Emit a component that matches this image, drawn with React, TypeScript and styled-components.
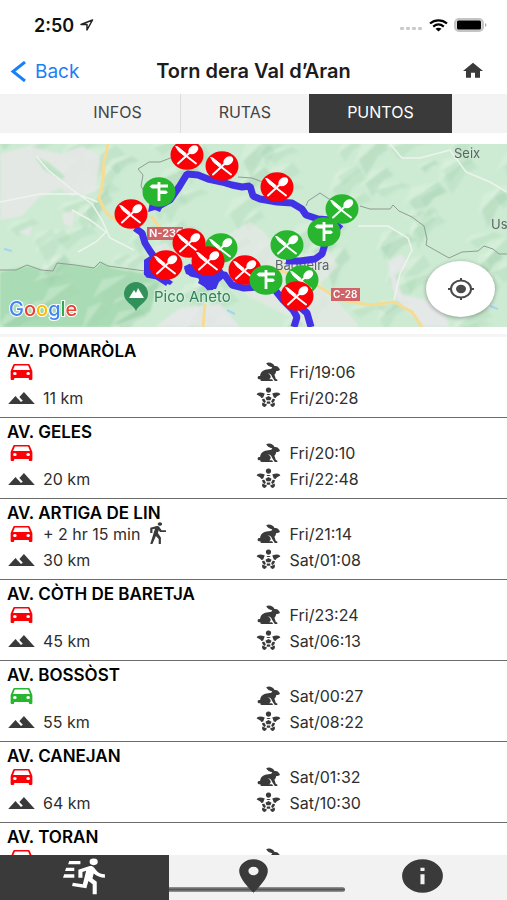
import React from "react";
import styled, { createGlobalStyle } from "styled-components";

const GlobalStyle = createGlobalStyle`
  *, *::before, *::after { box-sizing: border-box; }
  body { margin: 0; background: #fff; }
  button { font: inherit; color: inherit; border: 0; margin: 0; padding: 0; background: none; cursor: pointer; }
`;

const INK = "#3a3a3a";
const RED = "#fb0007";
const GREEN = "#27b62e";

const Screen = styled.div`
  display: flex;
  flex-direction: column;
  height: 100vh;
  overflow: hidden;
  background: #fff;
  color: #222;
  font-family: Inter, "Liberation Sans", sans-serif;
`;

const StatusBar = styled.div`
  display: flex;
  flex: none;
  align-items: center;
  justify-content: space-between;
  height: 50px;
  padding: 0 20px 0 34px;
`;

const Clock = styled.div`
  display: flex;
  align-items: center;
  gap: 6px;
  font-size: 18px;
  font-weight: 600;
  color: #111;
`;

const Signals = styled.div`
  display: flex;
  align-items: center;
  gap: 6px;
`;

const Header = styled.header`
  display: grid;
  flex: none;
  grid-template-columns: 1fr auto 1fr;
  align-items: center;
  height: 44px;
  padding: 0 10px 2px;
`;

const BackButton = styled.button`
  display: flex;
  align-items: center;
  gap: 8px;
  justify-self: start;
  font-size: 19px;
  color: #1a80f5;
`;

const Title = styled.h1`
  margin: 0;
  font-size: 20px;
  line-height: 24px;
  font-weight: 600;
  color: #1c1c1c;
`;

const HomeButton = styled.button`
  display: flex;
  justify-self: end;
  padding-right: 12px;
`;

const Tabs = styled.nav`
  display: flex;
  flex: none;
  justify-content: center;
  height: 39px;
  background: #f3f3f3;
`;

const Tab = styled.button<{ $active?: boolean; $divided?: boolean }>`
  padding: 0 38px 3px;
  font-size: 16px;
  color: ${(p) => (p.$active ? "#fff" : "#444")};
  background: ${(p) => (p.$active ? INK : "transparent")};
  border-right: ${(p) => (p.$divided ? "1px solid #dcdcdc" : "0")};
`;

const MapPane = styled.section`
  position: relative;
  flex: none;
  height: 183px;
  margin-top: 11px;
  overflow: hidden;
`;

const MapDrawing = styled.svg`
  display: block;
  width: 100%;
  height: 100%;
`;

const LocateButton = styled.button`
  position: absolute;
  right: 12px;
  bottom: 10px;
  display: flex;
  align-items: center;
  justify-content: center;
  width: 69px;
  height: 56px;
  border-radius: 50%;
  background: #fff;
  box-shadow: 0 1px 4px rgba(0, 0, 0, 0.35);
`;

const List = styled.ul`
  flex: 1;
  min-height: 0;
  margin: 7px 0 0;
  padding: 0;
  list-style: none;
  overflow-y: auto;
  scrollbar-width: none;
  border-top: 3px solid #f5f5f5;
`;

const Point = styled.li`
  display: grid;
  grid-template-columns: 1fr 1fr;
  grid-template-rows: 20px 22px 30px;
  padding: 4px 7px;
  border-bottom: 1px solid #6b6b6b;
`;

const PointName = styled.h2`
  grid-column: 1 / -1;
  margin: 0;
  font-size: 17px;
  line-height: 20px;
  font-weight: 600;
  color: #000;
`;

const Fact = styled.div`
  display: flex;
  align-items: center;
  gap: 7px;
  font-size: 16px;
  line-height: 20px;
  color: #2e2e2e;
`;

const Duration = styled.span`
  display: flex;
  align-items: center;
  gap: 3px;
`;

const BottomBar = styled.nav`
  position: relative;
  display: grid;
  flex: none;
  grid-template-columns: repeat(3, 1fr);
  height: 45px;
  background: #f2f2f2;
`;

const HomeIndicator = styled.div`
  position: absolute;
  left: 32%;
  bottom: 8px;
  width: 36%;
  height: 5px;
  border-radius: 3px;
  background: linear-gradient(#9a9a9a, #555, #9a9a9a);
`;

const BottomTab = styled.button<{ $active?: boolean }>`
  position: relative;
  display: flex;
  align-items: center;
  justify-content: center;
  padding-bottom: 3px;
  color: ${(p) => (p.$active ? "#fff" : INK)};
  background: ${(p) => (p.$active ? INK : "transparent")};
`;

type IconProps = { d: string; color?: string; width?: number; height?: number };

const Icon = ({ d, color = INK, width = 29, height = 24 }: IconProps) => (
  <svg width={width} height={height} viewBox="0 0 24 24" preserveAspectRatio="none" aria-hidden="true" fill={color}>
    <path d={d} />
  </svg>
);

const CAR =
  "M5,10L6.5,5.5H17.5L19,10M17.5,15A1.5,1.5 0 0,1 16,13.5A1.5,1.5 0 0,1 17.5,12A1.5,1.5 0 0,1 19,13.5A1.5,1.5 0 0,1 17.5,15M6.5,15A1.5,1.5 0 0,1 5,13.5A1.5,1.5 0 0,1 6.5,12A1.5,1.5 0 0,1 8,13.5A1.5,1.5 0 0,1 6.5,15M18.92,5C18.72,4.42 18.16,4 17.5,4H6.5C5.84,4 5.28,4.42 5.08,5L3,11V19A1,1 0 0,0 4,20H5A1,1 0 0,0 6,19V18H18V19A1,1 0 0,0 19,20H20A1,1 0 0,0 21,19V11L18.92,5Z";
const MOUNTAIN = "M14,6L10.25,11L13.1,14.8L11.5,16C9.81,13.75 7,10 7,10L1,18H23L14,6Z";
const WALK =
  "M14.12,10H19V8.2H15.38L13.38,4.87C13.08,4.37 12.54,4.03 11.92,4.03C11.74,4.03 11.58,4.06 11.42,4.11L6,5.8V11H7.8V7.33L9.91,6.67L6,22H7.8L10.67,13.89L13,17V22H14.8V15.59L12.31,11.05L13.04,8.18M14,3.8C15,3.8 15.8,3 15.8,2C15.8,1 15,0.2 14,0.2C13,0.2 12.2,1 12.2,2C12.2,3 13,3.8 14,3.8Z";
const RUN =
  "M16.5,5.5A2,2 0 0,0 18.5,3.5A2,2 0 0,0 16.5,1.5A2,2 0 0,0 14.5,3.5A2,2 0 0,0 16.5,5.5M12.9,19.4L13.9,15L16,17V23H18V15.5L15.9,13.5L16.5,10.5C17.89,12.09 19.89,13 22,13V11C20.24,11.03 18.6,10.11 17.7,8.6L16.7,7C16.34,6.4 15.7,6 15,6C14.7,6 14.5,6.1 14.2,6.1L9,8.3V13H11V9.6L12.8,8.9L11.2,17L6.3,16L5.9,18L12.9,19.4M3,7H7V9H2.5ZM4.5,3H10V5H4ZM2,11H7V13H1.5Z";
const PIN =
  "M12,11.5A2.5,2.5 0 0,1 9.5,9A2.5,2.5 0 0,1 12,6.5A2.5,2.5 0 0,1 14.5,9A2.5,2.5 0 0,1 12,11.5M12,2A7,7 0 0,0 5,9C5,14.25 12,22 12,22C12,22 19,14.25 19,9A7,7 0 0,0 12,2Z";
const INFO = "M13,9H11V7H13M13,17H11V11H13M12,2A10,10 0 0,0 2,12A10,10 0 0,0 12,22A10,10 0 0,0 22,12A10,10 0 0,0 12,2Z";
const HOME = "M10,20V14H14V20H19V12H22L12,2L2,12H5V20H10Z";
const RABBIT =
  "M19.2 21H17.2L14.9 16.8C14.7 14.8 13.2 13.2 11 13C13 14 14 15.6 13.8 17.3C13.6 18.5 13 19 12.4 19.3H14.6C15.4 19.5 15.7 20.3 15.6 21H6.3C5.4 20.9 5.1 20 5.4 19.2C4.2 19.6 2.8 18.8 3 17.4C3.1 16.3 4.2 15.9 5 16.1C5.1 13 6.8 10.8 9.3 9.8C11 9.1 12.9 9.3 14.4 8.7C14.6 8.1 14.9 7.6 15.2 7.3C12.9 6.8 11 5.5 10.1 3.2C12.6 1.8 16 3 17 6.1C19.3 5.7 20.3 7 20.7 8.2C21.5 8.6 21.7 9.9 20.8 10.6C19.9 11.1 18.9 11.1 18.3 11.2C18.2 12.6 17.7 13.9 16.9 14.8L18.1 18.9C19.2 19 19.9 20 19.2 21Z";

const Turtle = () => (
  <svg width="29" height="24" viewBox="0 0 24 24" preserveAspectRatio="none" aria-hidden="true" fill={INK}>
    <path d="M12 1.6C10.2 1.6 9.6 3.2 9.9 4.8C10.1 6 11 6.8 12 6.8S13.9 6 14.1 4.8C14.4 3.2 13.8 1.6 12 1.6Z" />
    <path d="M8.9 7.6L7.6 11.4L6.1 12C5.4 10.4 3.8 9.7 2.2 8.6C2.8 6.6 5 5.8 8.9 7.6Z" />
    <path d="M15.1 7.6L16.4 11.4L17.9 12C18.6 10.4 20.2 9.7 21.8 8.6C21.2 6.6 19 5.8 15.1 7.6Z" />
    <path d="M10.2 8H13.8L12.9 9.1H11.1Z" />
    <path d="M12 10L14.5 11.7L13.6 14.2H10.4L9.5 11.7Z" />
    <path d="M6.7 13L8.6 12.8L9.8 15.4L9 17.1C7.6 16.4 6.7 15 6.7 13Z" />
    <path d="M17.3 13L15.4 12.8L14.2 15.4L15 17.1C16.4 16.4 17.3 15 17.3 13Z" />
    <path d="M10.7 15.5H13.3L13.6 17.4C12.6 17.8 11.4 17.8 10.4 17.4Z" />
    <path d="M7 16.6L10.7 18.6C10.5 19.8 9.6 20.9 8.4 21C6.9 20.7 6.1 18.6 7 16.6Z" />
    <path d="M17 16.6L13.3 18.6C13.5 19.8 14.4 20.9 15.6 21C17.1 20.7 17.9 18.6 17 16.6Z" />
  </svg>
);

type PinKind = "food" | "sign";
const pins: { x: number; y: number; kind: PinKind; color: string }[] = [
  { x: 187, y: 11, kind: "food", color: RED },
  { x: 222, y: 22, kind: "food", color: RED },
  { x: 277, y: 43, kind: "food", color: RED },
  { x: 159, y: 48, kind: "sign", color: GREEN },
  { x: 342, y: 65, kind: "food", color: GREEN },
  { x: 131, y: 70, kind: "food", color: RED },
  { x: 324, y: 88, kind: "sign", color: GREEN },
  { x: 221, y: 104, kind: "food", color: GREEN },
  { x: 189, y: 99, kind: "food", color: RED },
  { x: 287, y: 101, kind: "food", color: GREEN },
  { x: 208, y: 117, kind: "food", color: RED },
  { x: 166, y: 121, kind: "food", color: RED },
  { x: 245, y: 126, kind: "food", color: RED },
  { x: 266, y: 136, kind: "sign", color: GREEN },
  { x: 302, y: 136, kind: "food", color: GREEN },
  { x: 297, y: 152, kind: "food", color: RED },
];

const MapPin = ({ x, y, kind, color }: (typeof pins)[number]) => (
  <g transform={`translate(${x} ${y})`}>
    <ellipse rx="16.5" ry="14.7" fill={color} />
    {kind === "food" ? (
      <g stroke="#fff" fill="#fff" strokeLinecap="round">
        <path d="M-9 8.5L4 -3.5M-2 0L9 8.5" strokeWidth="2" fill="none" />
        <path d="M-11 -8.5L-9 -8L-1 -1.5L-3 .5L-8 -3.5Z" strokeWidth="1" strokeLinejoin="round" />
        <ellipse cx="6.3" cy="-5.2" rx="5.4" ry="3.9" transform="rotate(-35 6.3 -5.2)" stroke="none" />
      </g>
    ) : (
      <path
        d="M-1.4 -10H1.4V-7.5H9V-4.5H1.4V-1.5H7L9 .2L7 2H1.4V9H-1.4V-3.5H-7L-9.5 -5.5L-7 -7.5H-1.4Z"
        fill="#fff"
      />
    )}
  </g>
);

/* Deterministic relief: slanted ridges, each with a lit and a shaded side. */
const ridges = Array.from({ length: 110 }, (_, i) => {
  const x = (i * 67.3 + ((i * i * 17) % 43)) % 520;
  const y = (i * 41.9 + ((i * i * 11) % 31)) % 190;
  const w = 14 + ((i * 13) % 17);
  const h = 7 + ((i * 7) % 17);
  return {
    shade: `M${x} ${y}l${w} ${-h}l${w / 3} ${h / 2}l${-w / 2} ${h / 3}l${-w / 2} ${h}z`,
    light: `M${x} ${y}l${w} ${-h}l${-w * 0.9} ${h / 4}l${-w / 3} ${h}z`,
    dark: i % 4 === 0,
  };
});

const ROUTE = [
  "M159 62L170 56L179 43L187 30L198 31L208 35L222 38L232 41L242 43L250 42L253 52L260 55L277 58L292 59L302 65L306 71L318 75L330 76L341 85",
  "M325 100L322 110L315 115L300 117L286 117",
  "M135 84L142 89L145 99L150 107L155 114L149 122L147 130L157 132L168 139",
  "M187 121L191 129L200 131L205 138L210 144L217 134L224 130L232 141L244 144L258 143L275 146L283 156L293 166L297 173L294 183",
  "M300 163L307 169L309 176L311 183",
];

const MapView = () => (
  <MapDrawing viewBox="0 0 507 183" preserveAspectRatio="xMidYMid slice" role="img" aria-label="Map of the Val d'Aran route">
    <defs>
      <filter id="soft" x="-5%" y="-5%" width="110%" height="110%">
        <feGaussianBlur stdDeviation="1" />
      </filter>
    </defs>
    <rect width="507" height="183" fill="#cdebd3" />
    <g filter="url(#soft)">
      <path d="M0 128L28 122L54 129L62 119L95 124L101 118L112 124L146 130L158 140L150 168L110 183L0 183Z" fill="#a9dbb4" />
      {ridges.map((r, i) => (
        <g key={i}>
          <path d={r.shade} fill={r.dark ? "#93c6a0" : "#a6d4b0"} opacity="0.28" />
          <path d={r.light} fill="#e6f5e6" opacity="0.32" />
        </g>
      ))}
      <path d="M0 10L28 2L60 10L82 2L100 12L96 48L72 52L60 44L38 54L22 72L0 76ZM62 70L75 66L72 84L64 80ZM18 88L32 82L30 92Z" fill="#e8e8e8" opacity="0.85" />
      <path d="M222 94L250 78L264 88L280 112L330 108L338 122L320 140L340 160L360 183L310 183L244 150L232 130ZM146 106L166 98L176 110L150 112Z" fill="#e6e8e6" opacity="0.75" />
      <path d="M388 118L402 110L408 122L395 132L402 150L440 160L450 183L425 183L398 158L392 144ZM180 164L220 160L240 183L155 183Z" fill="#e8e8ea" opacity="0.85" />
      <path d="M34 12L48 18L65 32L62 36L44 26Z" fill="#bfe3c7" />
    </g>
    <g fill="none" stroke="#eef3ee" strokeWidth="1.5">
      <path d="M36 12L48 26L70 44L92 60L102 76L110 94L134 106M0 58L40 50L78 50L98 58M72 66L90 76L106 88L96 98L78 108" />
      <path d="M390 0L402 14L420 14L450 6L466 28L490 38L507 48M358 82L388 82L408 94L412 106L400 130L394 156" />
    </g>
    <g fill="none" stroke="#f6dc93" strokeWidth="3">
      <path d="M108 0L104 18L103 38L99 55L107 70L118 77M151 72L160 84L164 96M205 160L203 183M266 122L290 130L318 142L340 156L370 161L394 158L412 168L422 183" />
    </g>
    <g fill="none" stroke="#8e9c91" strokeWidth="1">
      <path d="M0 126L16 126L27 121L41 126L53 127L57 119L75 121L94 124L100 118L108 122L145 127M146 51L141 42L143 31L138 25L149 18L160 18L173 13M238 33L252 34L268 40M306 62L308 57L320 49L332 57M360 62L370 65L390 65L393 61L399 67L412 73L424 82L427 95L426 101L449 114L462 108L478 107L484 102L493 105L499 110L507 110" />
    </g>
    <path d="M4 105L12 107M227 166L235 170M490 162L498 165" stroke="#a8d2f3" strokeWidth="2" />

    <g fontFamily="Inter, sans-serif" fontSize="13" fill="#5f6368">
      <rect x="147" y="83" width="36" height="13" fill="#cf6468" />
      <text x="149" y="93" fill="#fff" fontSize="11" fontWeight="600">N-230</text>
      <text x="275" y="126">Baqueira</text>
      <rect x="331" y="144" width="29" height="13" fill="#cf6468" />
      <text x="333" y="154" fill="#fff" fontSize="10" fontWeight="600">C-28</text>
      <text x="454" y="14">Seix</text>
      <text x="491" y="85">Us</text>
      <text x="154" y="158" fill="#32805c" fontSize="15" stroke="#d5efdb" strokeWidth="2" paintOrder="stroke">Pico Aneto</text>
    </g>
    <path d="M136 167C133 160 124 158 124 150A12 12 0 0 1 148 150C148 158 139 160 136 167Z" fill="#32905b" />
    <path d="M129 154L134 146L136 149L138 144L144 154Z" fill="#fff" />

    <g fill="none" stroke="#4232e6" strokeWidth="7" strokeLinejoin="bevel">
      {ROUTE.map((d) => (
        <path key={d} d={d} />
      ))}
    </g>
    <path
      d="M144 116L153 110L162 130L173 138L170 141L163 138L157 135L144 131ZM184 124L192 120L222 125L226 132L219 138L216 145L208 145L198 139L200 134L186 130ZM150 58L163 62L160 68L155 66L148 68Z"
      fill="#4232e6"
    />
    {pins.map((p) => (
      <MapPin key={`${p.x}-${p.y}`} {...p} />
    ))}
    <text x="9" y="172" fontFamily="Inter, sans-serif" fontSize="20" fontWeight="500" stroke="#fff" strokeWidth="2" paintOrder="stroke">
      <tspan fill="#4285f4">G</tspan>
      <tspan fill="#ea4335">o</tspan>
      <tspan fill="#fbbc05">o</tspan>
      <tspan fill="#4285f4">g</tspan>
      <tspan fill="#34a853">l</tspan>
      <tspan fill="#ea4335">e</tspan>
    </text>
  </MapDrawing>
);

const points = [
  { name: "AV. POMARÒLA", km: 11, fast: "Fri/19:06", slow: "Fri/20:28", open: false },
  { name: "AV. GELES", km: 20, fast: "Fri/20:10", slow: "Fri/22:48", open: false },
  { name: "AV. ARTIGA DE LIN", km: 30, fast: "Fri/21:14", slow: "Sat/01:08", open: false, walk: "+ 2 hr 15 min" },
  { name: "AV. CÒTH DE BARETJA", km: 45, fast: "Fri/23:24", slow: "Sat/06:13", open: false },
  { name: "AV. BOSSÒST", km: 55, fast: "Sat/00:27", slow: "Sat/08:22", open: true },
  { name: "AV. CANEJAN", km: 64, fast: "Sat/01:32", slow: "Sat/10:30", open: false },
  { name: "AV. TORAN", open: false },
];

export default function App() {
  return (
    <Screen>
      <GlobalStyle />
      <StatusBar>
        <Clock>
          2:50
          <svg width="14" height="12" viewBox="0 0 14 12" fill="none" stroke="#222" strokeWidth="1.5" strokeLinejoin="round">
            <path d="M12.5 1L1 5.5H7V11Z" />
          </svg>
        </Clock>
        <Signals>
          <svg width="24" height="12" viewBox="0 0 24 12" fill="#cbcbcb">
            <rect x="1" y="8" width="4" height="3" rx="1" />
            <rect x="7" y="8" width="4" height="3" rx="1" />
            <rect x="13" y="8" width="4" height="3" rx="1" />
            <rect x="19" y="8" width="4" height="3" rx="1" />
          </svg>
          <svg width="19" height="13" viewBox="0 0 19 13" fill="none" stroke="#000" strokeWidth="2.2">
            <path d="M1 4.5C6 .3 13 .3 18 4.5M4.2 7.6C7.4 5 11.6 5 14.8 7.6" />
            <path d="M6.5 9.8C8.3 8.4 10.7 8.4 12.5 9.8L9.5 12.5Z" fill="#000" stroke="none" />
          </svg>
          <svg width="33" height="14" viewBox="0 0 33 14">
            <rect x="1" y="1" width="28" height="12" rx="4" fill="#ddd" stroke="#c4c4c4" strokeWidth="2" />
            <rect x="3" y="2.5" width="24" height="9" rx="1.5" fill="#000" />
            <path d="M31 5C33 6 33 8 31 9Z" fill="#aaa" />
          </svg>
        </Signals>
      </StatusBar>

      <Header>
        <BackButton type="button">
          <svg width="17" height="21" viewBox="0 0 17 21" fill="none" stroke="#1a80f5" strokeWidth="3">
            <path d="M15 1L3 10.5L15 20" />
          </svg>
          Back
        </BackButton>
        <Title>Torn dera Val d’Aran</Title>
        <HomeButton type="button" aria-label="Home">
          <Icon d={HOME} width={24} height={20} />
        </HomeButton>
      </Header>

      <Tabs>
        <Tab type="button" $divided>INFOS</Tab>
        <Tab type="button">RUTAS</Tab>
        <Tab type="button" $active>PUNTOS</Tab>
      </Tabs>

      <MapPane>
        <MapView />
        <LocateButton type="button" aria-label="My location">
          <svg width="28" height="24" viewBox="0 0 28 24" preserveAspectRatio="none" fill="none" stroke="#4a4a4a" strokeWidth="2">
            <ellipse cx="14" cy="12" rx="10" ry="8.5" />
            <path d="M14 1V4M14 20V23M1 12H4M24 12H27" />
            <ellipse cx="14" cy="12" rx="5" ry="4.2" fill="#4a4a4a" stroke="none" />
          </svg>
        </LocateButton>
      </MapPane>

      <List>
        {points.map((p) => (
          <Point key={p.name}>
            <PointName>{p.name}</PointName>
            <Fact>
              <Icon d={CAR} color={p.open ? GREEN : RED} />
              {p.walk && (
                <Duration>
                  {p.walk}
                  <Icon d={WALK} />
                </Duration>
              )}
            </Fact>
            <Fact>
              <Icon d={RABBIT} />
              {p.fast}
            </Fact>
            {p.slow && (
              <>
                <Fact>
                  <Icon d={MOUNTAIN} />
                  {p.km} km
                </Fact>
                <Fact>
                  <Turtle />
                  {p.slow}
                </Fact>
              </>
            )}
          </Point>
        ))}
      </List>

      <BottomBar>
        <HomeIndicator />
        <BottomTab type="button" $active aria-label="Race points">
          <Icon d={RUN} color="#fff" width={49} height={40} />
        </BottomTab>
        <BottomTab type="button" aria-label="Location">
          <Icon d={PIN} width={49} height={40} />
        </BottomTab>
        <BottomTab type="button" aria-label="Information">
          <Icon d={INFO} width={49} height={40} />
        </BottomTab>
      </BottomBar>
    </Screen>
  );
}
